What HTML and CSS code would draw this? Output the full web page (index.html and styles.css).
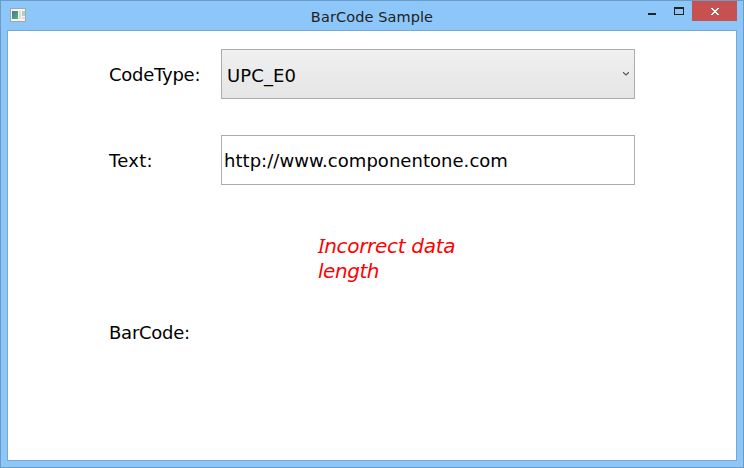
FILE: index.html
```html
<!DOCTYPE html>
<html lang="en">
<head>
<meta charset="utf-8">
<title>BarCode Sample</title>
<link rel="stylesheet" href="styles.css">
</head>
<body>
<div class="window">
  <header class="titlebar">
    <svg class="app-icon" width="16" height="14" viewBox="0 0 16 14">
      <defs><linearGradient id="pane" x1="0" y1="0" x2="1" y2="1"><stop offset="0" stop-color="#3f78a4"/><stop offset="1" stop-color="#57b36b"/></linearGradient></defs>
      <rect x=".5" y=".5" width="15" height="13" fill="#f4f4f4" stroke="#a5a5a5"/>
      <rect x="2" y="3" width="6" height="8" fill="url(#pane)"/>
      <rect x="9" y="3" width="2" height="8" fill="#dcdcdc"/>
      <rect x="12" y="3" width="3" height="5" fill="#a9d3c4"/>
      <rect x="12" y="9" width="3" height="2" fill="#dedede"/>
    </svg>
    <h1 class="title"><span>BarCode Sample</span></h1>
    <div class="controls">
      <svg width="69" height="20" viewBox="0 0 69 20" shape-rendering="crispEdges">
        <rect x="25" y="12" width="8" height="2" fill="#222"/>
        <path d="M51 6h10v8H51zM52 8v5h8V8z" fill="#222" fill-rule="evenodd"/>
      </svg>
      <div class="close"><svg width="45" height="20" viewBox="0 0 45 20" shape-rendering="crispEdges">
        <path fill="#fff" d="M19 7h2v1h1v1h2V8h1V7h2v1h-1v1h-1v1h-1v1h1v1h1v1h1v1h-2v-1h-1v-1h-2v1h-1v1h-2v-1h1v-1h1v-1h1v-1h-1V9h-1V8h-1z"/>
      </svg></div>
    </div>
  </header>
  <main class="client">
    <div class="row">
      <label class="label"><span class="t-type">CodeType:</span></label>
      <div class="field combo"><span class="t-upc">UPC_E0</span>
        <svg class="chevron" width="6" height="5" viewBox="0 0 6 5"><path d="M.5 1v.7L3 4l2.500-2.300V1" fill="none" stroke="#555" stroke-width="1.100"/></svg>
      </div>
    </div>
    <div class="row">
      <label class="label"><span class="t-text">Text:</span></label>
      <div class="field input"><span class="t-url">http://www.componentone.com</span></div>
    </div>
    <p class="error"><span class="t-err"><span class="serif-i">I</span>ncorrect data</span><br><span class="t-len">length</span></p>
    <div class="label barcode"><span class="t-bar">BarCode:</span></div>
  </main>
</div>
</body>
</html>
```
FILE: styles.css
```css
* { box-sizing: border-box; }
body { margin: 0; font-family: "DejaVu Sans", sans-serif; color: #000; }
.window { width: 744px; height: 468px; padding: 0 6px 6px; background: #8dc7f9; border: 1px solid #6b9bc7; }
.titlebar { display: flex; height: 29px; align-items: flex-start; }
.app-icon { margin: 7px 0 0 3px; flex: none; }
.title { flex: 1; margin: 5px 0 0; padding-left: 95px; text-align: center; font-size: 14.500px; font-weight: 400; line-height: 22px; letter-spacing: .1px; color: #222; white-space: nowrap; }
.controls { display: flex; height: 20px; }
.controls svg { display: block; }
.close { width: 45px; height: 20px; background: #c75050; }
.client { width: 730px; height: 431px; padding-top: 18px; background: #fff; border: 1px solid #78a9d5; }
.row { display: flex; align-items: center; height: 50px; margin-bottom: 36px; padding-left: 101px; }
.label { width: 112px; padding-top: 2px; font-size: 18px; line-height: 26px; white-space: nowrap; }
.t-type { letter-spacing: -.25px; }
.t-text { letter-spacing: .3px; }
.t-bar { letter-spacing: -.25px; }
.field { display: flex; align-items: center; width: 414px; height: 50px; border: 1px solid #acacac; font-size: 18px; white-space: nowrap; }
.combo { justify-content: space-between; padding: 0 5px; background: linear-gradient(#f0f0f0, #e5e5e5); }
.t-upc { padding-top: 2px; letter-spacing: .1px; }
.chevron { margin-top: -2px; }
.input { padding-left: 2px; border-color: #abadb3; }
.t-url { letter-spacing: .04px; }
.error { width: 160px; margin: 49px 0 0 310px; font-size: 20px; font-style: italic; line-height: 25px; color: #f00; white-space: nowrap; }
.t-err { letter-spacing: -.3px; }
.t-len { letter-spacing: -.45px; }
.serif-i { font-family: "Noto Sans", sans-serif; line-height: 1; }
.barcode { margin: 34px 0 0 101px; }
```
